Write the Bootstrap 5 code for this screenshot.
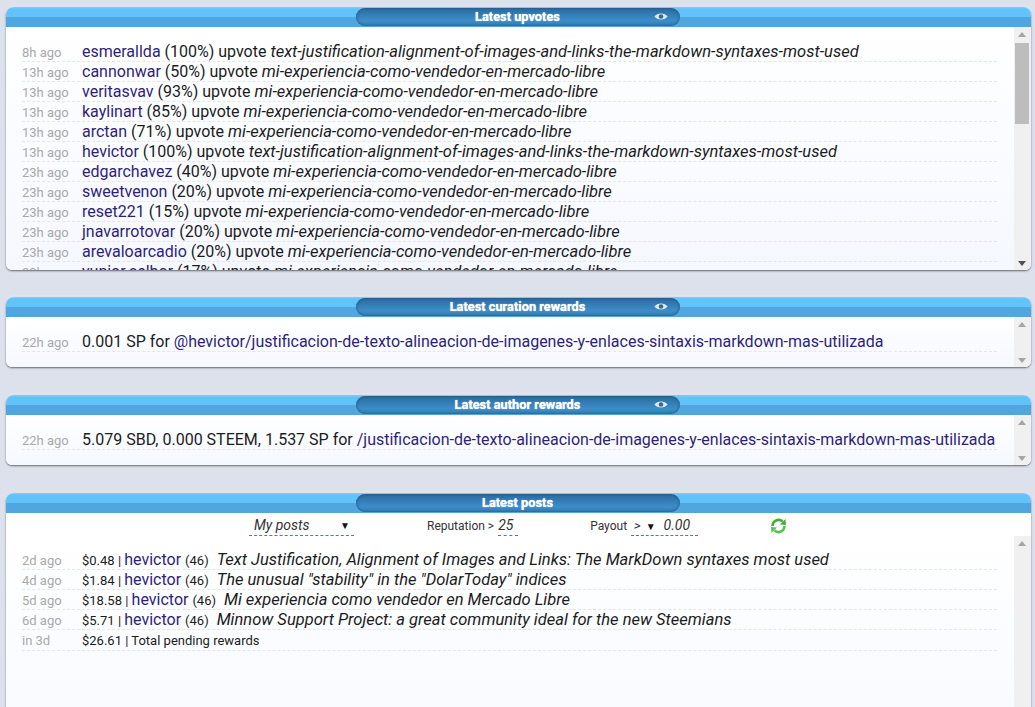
<!DOCTYPE html>
<html lang="en">
<head>
<meta charset="utf-8">
<title>Steem activity</title>
<link href="https://cdn.jsdelivr.net/npm/bootstrap@5.3.0/dist/css/bootstrap.min.css" rel="stylesheet">
<style>
html,body{height:707px;overflow:hidden}
body{background:#dce1ec;font-family:Roboto,"Liberation Sans",sans-serif;font-size:16px;color:#1c1c1c;padding:7px 4px 0 6px}
.pnl{background:#fff;border-radius:8px 8px 6px 6px;box-shadow:0 1px 2px rgba(0,0,0,.55),0 -1px 3px rgba(255,255,255,.4);margin-bottom:28px;overflow:hidden}
.pnl-first{margin-bottom:27px}
.pnl-last{height:260px;margin-bottom:0;border-radius:8px 8px 0 0;background:#f7faff}
.pnl-head{height:20px;background:linear-gradient(#7fd0fb 0,#62c3fb 2px,#62c3fb 50%,#50a6de 50%,#50a6de 100%);position:relative;display:flex;justify-content:center}
.pill{width:324px;height:18px;margin:1px 2px 0 0;border-radius:9px;background:linear-gradient(#2a6a9f,#3c8dc9 70%,#347fb8);box-shadow:inset 0 0 3px #1d4f7a;color:#fff;font-size:12.8px;font-weight:700;line-height:18px;text-align:center;position:relative;text-shadow:0 0 1px #fff}
.eye{position:absolute;right:12px;top:3px}
.pnl-main{display:flex;background:linear-gradient(#fff,#f5f8ff)}
.big-h{height:243px}.small-h{height:50px}
.feed{flex:1 1 auto;padding:15px 17px 0 16px;overflow:hidden;min-width:0}
.entry{display:flex;height:20px;line-height:19px;border-bottom:1px dashed #e4e6ea;white-space:nowrap}
.entry em{font-size:16.5px}
.when{flex:0 0 60px;color:#a9a9a9;font-size:13px;line-height:21px}
.who{color:#2f1f7a}
.sm-t{font-size:13px}
.fake-bar{flex:0 0 17px;background:#f0f0f0;display:flex;flex-direction:column;align-items:center;justify-content:space-between;padding:5px 0 4px 0;position:relative}
.thumb{position:absolute;left:1px;right:2px;top:16px;height:81px;background:#bdbdbd}
.up{width:0;height:0;border-left:4px solid transparent;border-right:4px solid transparent;border-bottom:5px solid #a5a5a5;margin-right:1px}
.down{width:0;height:0;border-left:4px solid transparent;border-right:4px solid transparent;border-top:5px solid #a5a5a5;margin-right:1px}
.down-dark{border-top-color:#505050}
.filters{height:20px;display:flex;align-items:flex-end;font-size:12px;color:#333;background:#fff;padding-top:3px;box-sizing:content-box}
.pick{border-bottom:1px dashed #4a7f95;height:20px;line-height:19px;font-style:italic;font-size:14px;color:#333;display:flex;justify-content:space-between}
.pick-a{width:105px;margin-left:243px;padding:0 4px 0 5px}
.lbl{line-height:20px;height:20px}
.lbl-rep{margin-left:73px}
.pick-b{width:20px;margin-left:4px}
.lbl-pay{margin-left:72px}
.pick-c{width:67px;margin-left:4px;font-size:14px;padding:0 8px 0 3px}
.tri{font-size:10px;font-style:normal;color:#111}
.tri-wide{margin-left:2px}
.spin{margin-left:72px;align-self:center}
.posts-main{height:240px;background:linear-gradient(#fff,#f6f9ff)}
.posts-feed{padding-top:14px}
.postbar{padding-top:5px}
.entry-tall{height:21px;line-height:21px}
</style>
</head>
<body>
<section class="pnl pnl-first">
  <div class="pnl-head"><div class="pill">Latest upvotes
    <svg class="eye" width="14" height="11" viewBox="0 0 14 11"><path d="M0.5 5.5C3 1.5 11 1.5 13.5 5.5C11 9.5 3 9.5 0.5 5.5Z" fill="#dfeaf2"/><circle cx="7" cy="5.5" r="2.3" fill="#3a6a90"/></svg></div></div>
  <div class="pnl-main big-h">
    <div class="feed">
      <div class="entry"><span class="when">8h ago</span><span><span class="who">esmerallda</span> (100%) upvote <em>text-justification-alignment-of-images-and-links-the-markdown-syntaxes-most-used</em></span></div>
      <div class="entry"><span class="when">13h ago</span><span><span class="who">cannonwar</span> (50%) upvote <em>mi-experiencia-como-vendedor-en-mercado-libre</em></span></div>
      <div class="entry"><span class="when">13h ago</span><span><span class="who">veritasvav</span> (93%) upvote <em>mi-experiencia-como-vendedor-en-mercado-libre</em></span></div>
      <div class="entry"><span class="when">13h ago</span><span><span class="who">kaylinart</span> (85%) upvote <em>mi-experiencia-como-vendedor-en-mercado-libre</em></span></div>
      <div class="entry"><span class="when">13h ago</span><span><span class="who">arctan</span> (71%) upvote <em>mi-experiencia-como-vendedor-en-mercado-libre</em></span></div>
      <div class="entry"><span class="when">13h ago</span><span><span class="who">hevictor</span> (100%) upvote <em>text-justification-alignment-of-images-and-links-the-markdown-syntaxes-most-used</em></span></div>
      <div class="entry"><span class="when">23h ago</span><span><span class="who">edgarchavez</span> (40%) upvote <em>mi-experiencia-como-vendedor-en-mercado-libre</em></span></div>
      <div class="entry"><span class="when">23h ago</span><span><span class="who">sweetvenon</span> (20%) upvote <em>mi-experiencia-como-vendedor-en-mercado-libre</em></span></div>
      <div class="entry"><span class="when">23h ago</span><span><span class="who">reset221</span> (15%) upvote <em>mi-experiencia-como-vendedor-en-mercado-libre</em></span></div>
      <div class="entry"><span class="when">23h ago</span><span><span class="who">jnavarrotovar</span> (20%) upvote <em>mi-experiencia-como-vendedor-en-mercado-libre</em></span></div>
      <div class="entry"><span class="when">23h ago</span><span><span class="who">arevaloarcadio</span> (20%) upvote <em>mi-experiencia-como-vendedor-en-mercado-libre</em></span></div>
      <div class="entry"><span class="when">23h ago</span><span><span class="who">yunior.selbor</span> (17%) upvote <em>mi-experiencia-como-vendedor-en-mercado-libre</em></span></div>
    </div>
    <div class="fake-bar"><div class="up"></div><div class="thumb"></div><div class="down down-dark"></div></div>
  </div>
</section>
<section class="pnl">
  <div class="pnl-head"><div class="pill">Latest curation rewards
    <svg class="eye" width="14" height="11" viewBox="0 0 14 11"><path d="M0.5 5.5C3 1.5 11 1.5 13.5 5.5C11 9.5 3 9.5 0.5 5.5Z" fill="#dfeaf2"/><circle cx="7" cy="5.5" r="2.3" fill="#3a6a90"/></svg></div></div>
  <div class="pnl-main small-h">
    <div class="feed">
      <div class="entry"><span class="when">22h ago</span><span>0.001 SP for <span class="who">@hevictor/justificacion-de-texto-alineacion-de-imagenes-y-enlaces-sintaxis-markdown-mas-utilizada</span></span></div>
    </div>
    <div class="fake-bar"><div class="up"></div><div class="down"></div></div>
  </div>
</section>
<section class="pnl">
  <div class="pnl-head"><div class="pill">Latest author rewards
    <svg class="eye" width="14" height="11" viewBox="0 0 14 11"><path d="M0.5 5.5C3 1.5 11 1.5 13.5 5.5C11 9.5 3 9.5 0.5 5.5Z" fill="#dfeaf2"/><circle cx="7" cy="5.5" r="2.3" fill="#3a6a90"/></svg></div></div>
  <div class="pnl-main small-h">
    <div class="feed">
      <div class="entry"><span class="when">22h ago</span><span>5.079 SBD, 0.000 STEEM, 1.537 SP for <span class="who">/justificacion-de-texto-alineacion-de-imagenes-y-enlaces-sintaxis-markdown-mas-utilizada</span></span></div>
    </div>
    <div class="fake-bar"><div class="up"></div><div class="down"></div></div>
  </div>
</section>
<section class="pnl pnl-last">
  <div class="pnl-head"><div class="pill">Latest posts</div></div>
  <div class="filters">
    <div class="pick pick-a"><span>My posts</span><span class="tri">▼</span></div>
    <div class="lbl lbl-rep">Reputation &gt;</div>
    <div class="pick pick-b">25</div>
    <div class="lbl lbl-pay">Payout</div>
    <div class="pick pick-c"><span class="sm-t">&gt; <span class="tri tri-wide">▼</span></span><span>0.00</span></div>
    <svg class="spin" width="17" height="16" viewBox="0 0 17 16"><path d="M2.5 8A6 6 0 0 1 12.6 3.6" fill="none" stroke="#3fae3a" stroke-width="2.6"/><path d="M10 6.5L16 7L15.5 1Z" fill="#3fae3a"/><path d="M14.5 8A6 6 0 0 1 4.4 12.4" fill="none" stroke="#5cc04f" stroke-width="2.6"/><path d="M7 9.5L1 9L1.5 15Z" fill="#5cc04f"/></svg>
  </div>
  <div class="pnl-main posts-main">
    <div class="feed posts-feed">
      <div class="entry"><span class="when">2d ago</span><span><span class="sm-t">$0.48 | </span><span class="who">hevictor</span> <span class="sm-t">(46)</span>&nbsp; <em>Text Justification, Alignment of Images and Links: The MarkDown syntaxes most used</em></span></div>
      <div class="entry"><span class="when">4d ago</span><span><span class="sm-t">$1.84 | </span><span class="who">hevictor</span> <span class="sm-t">(46)</span>&nbsp; <em>The unusual "stability" in the "DolarToday" indices</em></span></div>
      <div class="entry"><span class="when">5d ago</span><span><span class="sm-t">$18.58 | </span><span class="who">hevictor</span> <span class="sm-t">(46)</span>&nbsp; <em>Mi experiencia como vendedor en Mercado Libre</em></span></div>
      <div class="entry"><span class="when">6d ago</span><span><span class="sm-t">$5.71 | </span><span class="who">hevictor</span> <span class="sm-t">(46)</span>&nbsp; <em>Minnow Support Project: a great community ideal for the new Steemians</em></span></div>
      <div class="entry entry-tall"><span class="when">in 3d</span><span class="sm-t">$26.61 | Total pending rewards</span></div>
    </div>
    <div class="fake-bar postbar"><div class="up"></div></div>
  </div>
</section>
<script src="https://cdn.jsdelivr.net/npm/bootstrap@5.3.0/dist/js/bootstrap.bundle.min.js"></script>
</body>
</html>
